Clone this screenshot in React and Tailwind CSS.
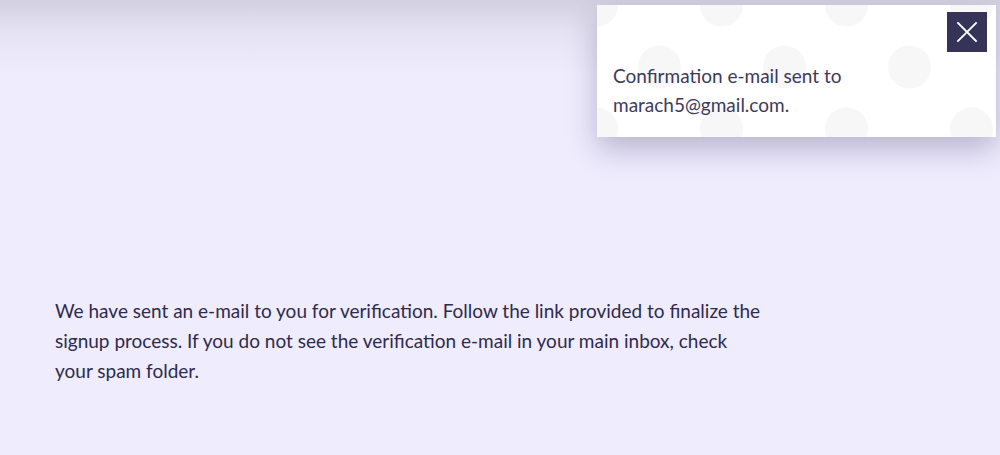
import React from 'react';

const CloseIcon = () => (
  <svg viewBox="0 0 24 24" className="w-6 h-6" fill="none" stroke="white" strokeWidth="1.8" strokeLinecap="square">
    <path d="M3 3L21 21M21 3L3 21" />
  </svg>
);

const Toast = ({ email, onClose }) => (
  <div className="absolute top-[5px] left-[597px] w-[399px] h-[132px] bg-white shadow-[0_12px_28px_rgba(40,35,80,0.28)] bg-[radial-gradient(circle,#f7f7f7_21px,transparent_22px),radial-gradient(circle,#f7f7f7_21px,transparent_22px)] bg-[size:125px_124px] bg-[position:0_0,62px_62px]">
    <div className="flex justify-end pt-[7px] pr-[9px]">
      <button
        onClick={onClose}
        className="w-10 h-10 bg-[#363358] flex items-center justify-center"
      >
        <CloseIcon />
      </button>
    </div>
    <p className="px-4 pt-[9px] text-[19px] leading-[29px] text-[#3d3a5c] w-[300px]">
      Confirmation e-mail sent to {email}.
    </p>
  </div>
);

export default function App() {
  return (
    <div className="relative w-full h-[455px] bg-[#efecfe] overflow-hidden font-['Lato','Open_Sans',sans-serif]">
      <div className="h-[75px] bg-linear-to-b from-[#d3d0e0] via-[#e6e3f4] via-45% to-[#efecfe]" />
      <div className="pt-[221px] pl-[55px]">
        <p className="w-[712px] text-[19px] leading-[30px] text-[#2e2b4d]">
          We have sent an e-mail to you for verification. Follow the link provided to finalize the
          signup process. If you do not see the verification e-mail in your main inbox, check your
          spam folder.
        </p>
      </div>
      <Toast email="marach5@gmail.com" onClose={() => {}} />
    </div>
  );
}
